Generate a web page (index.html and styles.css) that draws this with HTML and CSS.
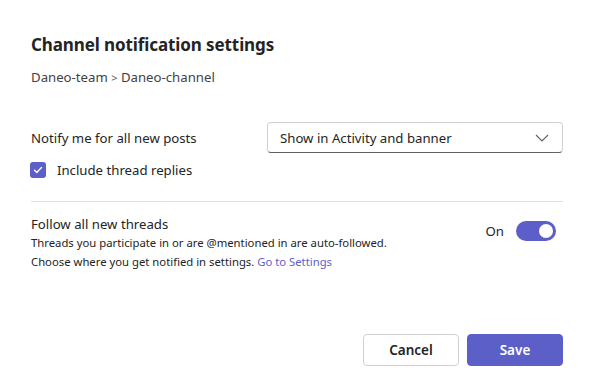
FILE: index.html
```html
<!DOCTYPE html>
<html>
<head>
<meta charset="utf-8">
<link rel="stylesheet" href="styles.css">
</head>
<body>
<div class="dialog">
  <h1 class="title">Channel notification settings</h1>
  <div class="crumb">Daneo-team <span class="sep">&gt;</span> Daneo-channel</div>

  <div class="row notify">
    <div class="label">Notify me for all new posts</div>
    <div class="select">
      <span>Show in Activity and banner</span>
      <svg class="chev" width="14" height="8" viewBox="0 0 14 8"><path d="M1 1l6 6 6-6" fill="none" stroke="#616161" stroke-width="1.1"/></svg>
    </div>
  </div>
  <div class="check-row">
    <span class="check"><svg width="10" height="8" viewBox="0 0 10 8"><path d="M1.5 4.2l2.3 2.2L8.5 1.6" fill="none" stroke="#fff" stroke-width="1.4" stroke-linecap="round" stroke-linejoin="round"/></svg></span>
    <span class="label">Include thread replies</span>
  </div>

  <div class="divider"></div>

  <div class="row follow">
    <div class="follow-text">
      <div class="label">Follow all new threads</div>
      <div class="small">Threads you participate in or are @mentioned in are auto-followed.</div>
      <div class="small">Choose where you get notified in settings. <a class="link">Go to Settings</a></div>
    </div>
    <div class="toggle-wrap">
      <span class="on">On</span>
      <span class="toggle"><span class="knob"></span></span>
    </div>
  </div>

  <div class="actions">
    <button class="btn cancel">Cancel</button>
    <button class="btn save">Save</button>
  </div>
</div>
</body>
</html>
```

FILE: styles.css
```css
html, body {
  margin: 0;
  padding: 0;
  background: #fff;
}
body {
  font-family: "Noto Sans", "Open Sans", sans-serif;
  color: #242424;
  width: 595px;
  height: 392px;
  overflow: hidden;
}
.dialog {
  padding: 33px 32px 0 31px;
}
.title {
  margin: 0;
  font-size: 17px;
  font-weight: 700;
  line-height: 24px;
  letter-spacing: -0.1px;
}
.crumb {
  margin-top: 10px;
  font-size: 13.2px;
  line-height: 20px;
  color: #424242;
}
.sep {
  color: #616161;
  font-size: 11px;
}
.row {
  display: flex;
  align-items: center;
  justify-content: space-between;
}
.notify {
  margin-top: 34px;
}
.label {
  font-size: 13.2px;
  line-height: 20px;
}
.select {
  width: 296px;
  height: 31px;
  box-sizing: border-box;
  border: 1px solid #d1d1d1;
  border-bottom-color: #616161;
  border-radius: 4px;
  display: flex;
  align-items: center;
  justify-content: space-between;
  padding: 0 13px 0 12px;
  font-size: 13.2px;
}
.check-row {
  display: flex;
  align-items: center;
  margin-top: 7px;
  gap: 11px;
}
.check {
  width: 16px;
  height: 16px;
  border-radius: 3px;
  background: #5b5fc7;
  display: flex;
  align-items: center;
  justify-content: center;
  margin-left: -1px;
}
.divider {
  height: 1px;
  background: #e0e0e0;
  margin-top: 21px;
}
.follow {
  margin-top: 12px;
  align-items: flex-start;
}
.small {
  font-size: 11.3px;
  line-height: 18.5px;
  color: #242424;
}
.link {
  color: #5b5fc7;
}
.toggle-wrap {
  display: flex;
  align-items: center;
  gap: 12px;
  margin-top: 7px;
  margin-right: 7px;
}
.on {
  font-size: 13.2px;
}
.toggle {
  width: 40px;
  height: 20px;
  border-radius: 10px;
  background: #5b5fc7;
  display: flex;
  align-items: center;
  justify-content: flex-end;
  padding-right: 3px;
  box-sizing: border-box;
}
.knob {
  width: 14px;
  height: 14px;
  border-radius: 50%;
  background: #fff;
}
.actions {
  display: flex;
  justify-content: flex-end;
  gap: 8px;
  margin-top: 63px;
}
.btn {
  width: 96px;
  height: 32px;
  border-radius: 4px;
  font-family: inherit;
  font-size: 13.5px;
  font-weight: 600;
  cursor: pointer;
}
.cancel {
  background: #fff;
  border: 1px solid #d1d1d1;
  color: #242424;
}
.save {
  background: #5b5fc7;
  border: 1px solid #5b5fc7;
  color: #fff;
}
```
